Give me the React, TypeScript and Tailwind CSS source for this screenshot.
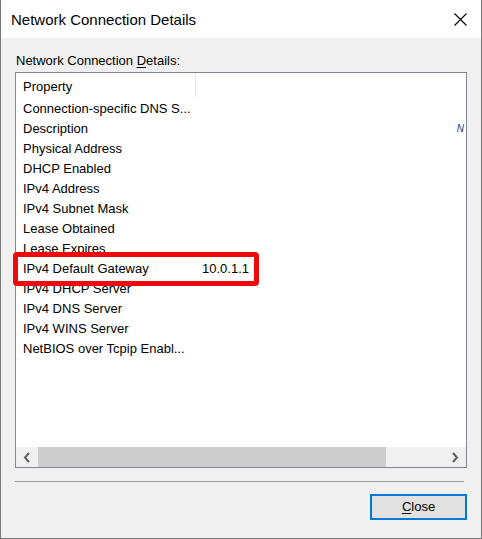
const ROWS: [string, string][] = [
  ['Connection-specific DNS S...', ''],
  ['Description', ''],
  ['Physical Address', ''],
  ['DHCP Enabled', ''],
  ['IPv4 Address', ''],
  ['IPv4 Subnet Mask', ''],
  ['Lease Obtained', ''],
  ['Lease Expires', ''],
  ['IPv4 Default Gateway', '10.0.1.1'],
  ['IPv4 DHCP Server', ''],
  ['IPv4 DNS Server', ''],
  ['IPv4 WINS Server', ''],
  ['NetBIOS over Tcpip Enabl...', ''],
];

function Chevron({ dir }: { dir: 'left' | 'right' }) {
  return (
    <svg width="8" height="11" viewBox="0 0 8 11" fill="none">
      <path
        d={dir === 'left' ? 'M6 1L2 5.5L6 10' : 'M2 1L6 5.5L2 10'}
        stroke="#606060"
        strokeWidth="2"
      />
    </svg>
  );
}

export default function App() {
  return (
    <div className="w-[482px] h-[539px] flex flex-col bg-[#f0f0f0] border-x border-b border-[#7a7a7a] font-['Liberation_Sans',sans-serif] text-[13px] text-black">
      {/* title bar */}
      <div className="h-[38px] shrink-0 bg-white flex items-center justify-between pl-[10px] pr-[14px]">
        <span className="text-[15px] leading-none pt-[1px]">Network Connection Details</span>
        <svg width="13" height="13" viewBox="0 0 13 13">
          <path d="M0.5 0.5L12.5 12.5M12.5 0.5L0.5 12.5" stroke="#000" strokeWidth="1.1" />
        </svg>
      </div>

      <div className="flex-1 flex flex-col px-[14px]">
        <div className="pt-[15px] h-[34px] leading-[16px] pl-[1px]">
          Network Connection <span className="underline underline-offset-2">D</span>etails:
        </div>

        {/* list view */}
        <div className="relative h-[396px] border border-[#828790] bg-white flex flex-col">
          <div className="flex-1 flex flex-col">
            <div className="h-[24px] flex items-center">
              <div className="w-[179px] h-full flex items-center pl-[7px] pt-[3px]">Property</div>
              <div className="w-px h-full bg-[#e5e5e5]" />
            </div>
            {ROWS.map(([name, value]) => (
              <div key={name} className="h-[20px] flex items-center pt-[3px]">
                <div className="w-[180px] pl-[7px] whitespace-nowrap overflow-hidden">{name}</div>
                <div className="pl-[6px] flex-1 flex">
                  {value}
                  {name === 'Description' && (
                    <span className="ml-auto mr-[2px] italic text-[10px] text-[#1a3a8a]">N</span>
                  )}
                </div>
              </div>
            ))}
          </div>

          {/* horizontal scrollbar */}
          <div className="h-[20px] flex bg-[#f0f0f0]">
            <div className="w-[22px] flex items-center justify-center">
              <Chevron dir="left" />
            </div>
            <div className="flex-1 flex">
              <div className="w-[348px] bg-[#cdcdcd]" />
            </div>
            <div className="w-[22px] flex items-center justify-center">
              <Chevron dir="right" />
            </div>
          </div>

          {/* highlight annotation */}
          <div className="absolute left-[-3px] top-[179px] w-[246px] h-[34px] border-[5px] border-[#ee0a0a] rounded-[4px]" />
        </div>

        <div className="mt-[13px] mr-[3px] h-px bg-[#a0a0a0]" />

        <div className="mt-[12px] flex justify-end">
          <button className="w-[97px] h-[26px] bg-[#e1e1e1] border-2 border-[#0078d7] flex items-center justify-center">
            <span>
              <span className="underline underline-offset-2">C</span>lose
            </span>
          </button>
        </div>
      </div>
    </div>
  );
}
